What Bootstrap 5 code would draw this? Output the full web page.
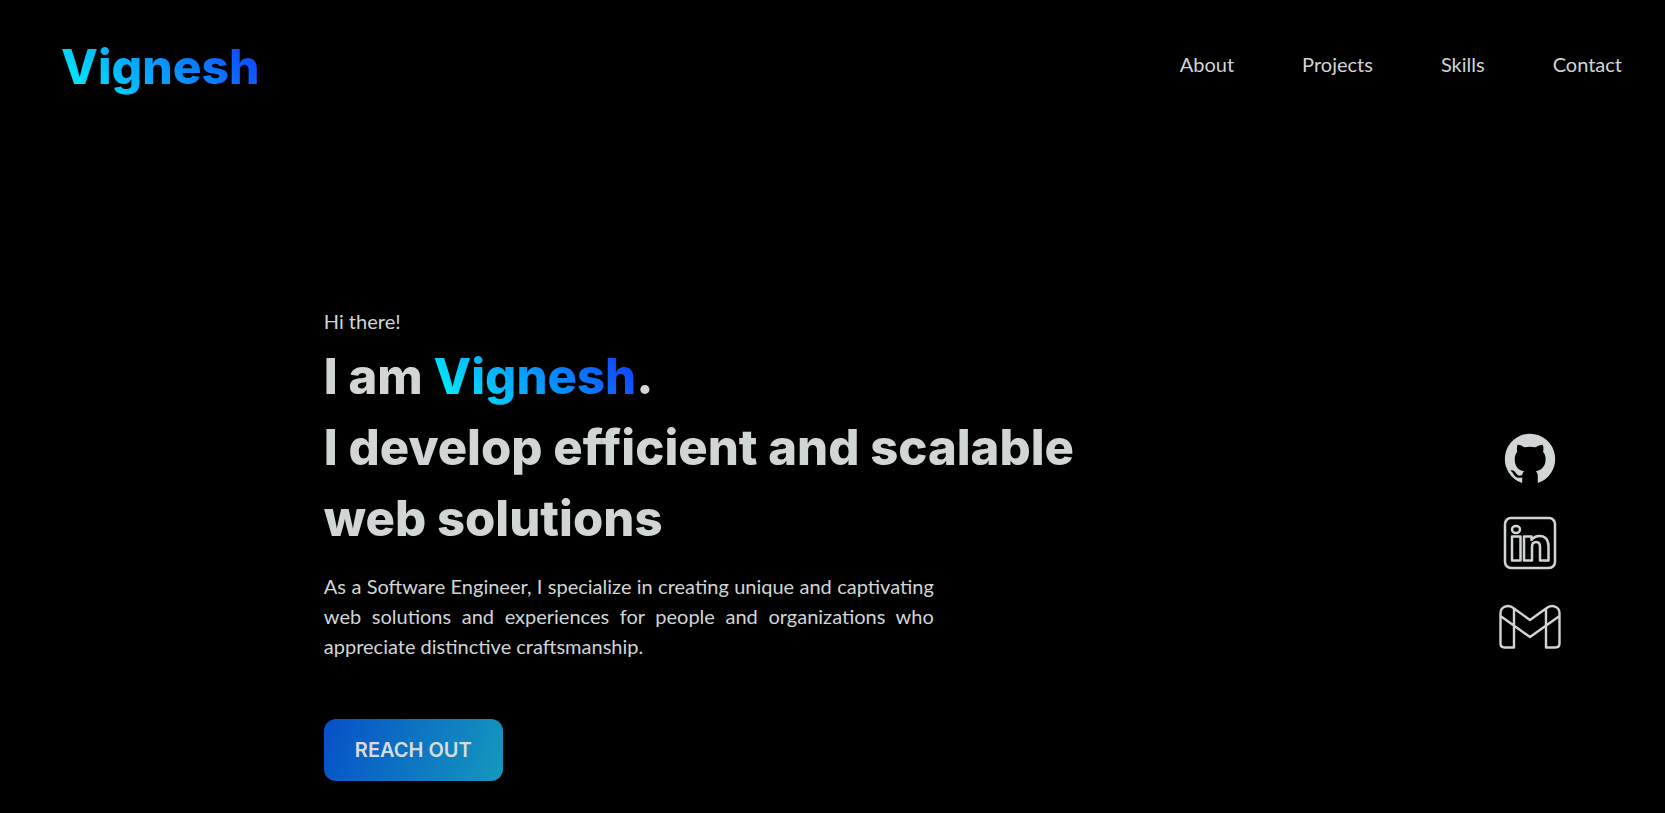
<!DOCTYPE html>
<html lang="en">
<head>
<meta charset="utf-8">
<meta name="viewport" content="width=device-width, initial-scale=1">
<title>Vignesh | Software Engineer</title>
<link href="https://cdn.jsdelivr.net/npm/bootstrap@5.3.0/dist/css/bootstrap.min.css" rel="stylesheet">
<style>
  :root { --ink: #d1d5d5; }
  body { background: #000; color: var(--ink); font: 400 20px/30px Lato, "Noto Sans", sans-serif; }
  .site-head { padding: 32px 43px 0 61px; }
  .display-type { font-family: Inter, "Noto Sans", sans-serif; font-weight: 800; }
  .brand { font-size: 48px; line-height: 70px; text-decoration: none; }
  .grad-text {
    background: linear-gradient(45deg, #00fcf8, #1233ff);
    -webkit-background-clip: text; background-clip: text; color: transparent;
  }
  .menu { column-gap: 68px; padding-top: 17px; }
  .menu a { color: var(--ink); text-decoration: none; }
  .menu a:hover { color: #fff; }
  .hero { padding: 204px 104px 32px 19.45%; }
  .headline { font-size: 49px; line-height: 71px; margin: 5px 0 17px; }
  .intro { max-width: 610px; text-align: justify; margin-bottom: 58px; }
  .cta {
    background: linear-gradient(110deg, #0650c8, #1499bd);
    color: #d9dcdd; border: 0; border-radius: 12px;
    font: 600 20px/30px Inter, "Noto Sans", sans-serif; padding: 16px 31px;
  }
  .cta:hover { color: #fff; }
  .social { row-gap: 31px; color: var(--ink); padding-bottom: 6px; }
  .social a { color: inherit; line-height: 0; }
</style>
</head>
<body class="d-flex flex-column min-vh-100">
<header class="site-head d-flex flex-wrap justify-content-between align-items-start">
  <a class="brand display-type grad-text" href="#">Vignesh</a>
  <nav class="menu d-flex flex-wrap" aria-label="Main">
    <a href="#about">About</a>
    <a href="#projects">Projects</a>
    <a href="#skills">Skills</a>
    <a href="#contact">Contact</a>
  </nav>
</header>

<main class="hero d-flex justify-content-between align-items-center">
  <section>
    <p class="mb-0">Hi there!</p>
    <h1 class="headline display-type">I am <span class="grad-text">Vignesh</span>.<br>I develop efficient and scalable<br>web solutions</h1>
    <p class="intro">As a Software Engineer, I specialize in creating unique and captivating web solutions and experiences for people and organizations who appreciate distinctive craftsmanship.</p>
    <button class="btn cta" type="button">REACH OUT</button>
  </section>

  <aside class="social d-flex flex-column align-items-center">
    <a href="#github" aria-label="GitHub">
      <svg width="52" height="52" viewBox="0 0 16 16" fill="currentColor" aria-hidden="true"><path d="M8 .2a7.8 7.8 0 0 0-2.400 15.200V13.700c-1.900.3-2.400-.5-2.700-1.100-.2-.4-.5-.8-.9-1.100 1-.2 1.500.6 1.800 1 .5.6 1.100.7 1.800.4.1-.5.4-.9.6-1.100C4.400 11.500 3.300 10.300 3.300 8c0-.9.3-1.600.8-2.200-.2-.6-.2-1.500.1-2.200.8 0 1.500.4 2.100.8a7.200 7.200 0 0 1 3.400 0c.7-.5 1.400-.8 2.200-.8.3.7.3 1.600.1 2.200.5.6.8 1.300.8 2.200 0 2.300-1.300 3.500-3 3.800.4.3.6.9.6 1.600v2A7.800 7.800 0 0 0 8 .2Z"/></svg>
    </a>
    <a href="#linkedin" aria-label="LinkedIn">
      <svg width="54" height="54" viewBox="0 0 54 54" fill="none" stroke="currentColor" stroke-width="2.500" stroke-linejoin="round" aria-hidden="true">
        <rect x="2" y="2" width="50" height="50" rx="6"/>
        <ellipse cx="13" cy="13.500" rx="4" ry="3.500"/>
        <path d="M9 20.500h8.500v24H9zM21 20.500h7.500V24c2-2.600 4.600-4 8-4 5.500 0 9 3.700 9 10.500v14H37V31c0-3.200-1.300-5-3.800-5s-4.200 2-4.200 5v13.500h-8z"/>
      </svg>
    </a>
    <a href="#mail" aria-label="Gmail">
      <svg width="62" height="48" viewBox="0 0 62 48" fill="none" stroke="currentColor" stroke-width="2.400" stroke-linejoin="round" aria-hidden="true">
        <path d="M15 7.500 31 19 47 7.500c6-5 13.500-1.500 13.500 4.500v30.500q0 4-4 4H47v-39M15 7.500C9 2.500 1.500 6 1.500 12v30.500q0 4 4 4H15v-39M1.500 15 31 36 60.500 15"/>
      </svg>
    </a>
  </aside>
</main>
<script src="https://cdn.jsdelivr.net/npm/bootstrap@5.3.0/dist/js/bootstrap.bundle.min.js"></script>
</body>
</html>
